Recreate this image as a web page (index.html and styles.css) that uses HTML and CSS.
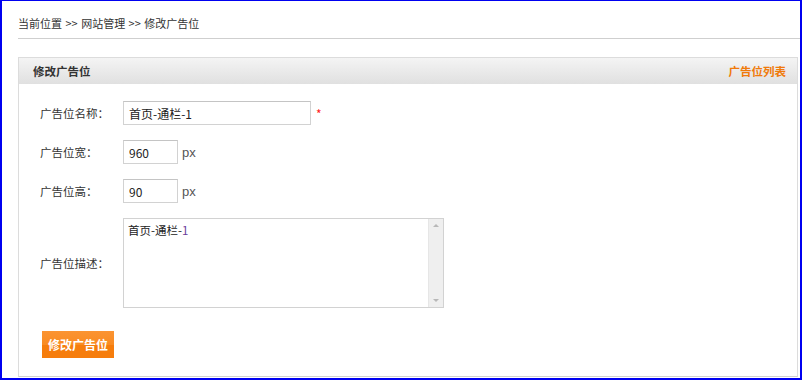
FILE: index.html
```html
<!DOCTYPE html>
<html lang="zh-CN">
<head>
<meta charset="utf-8">
<title>修改广告位</title>
<link rel="stylesheet" href="styles.css">
</head>
<body>
<div class="frame">
  <div class="crumb">当前位置 &gt;&gt; 网站管理 &gt;&gt; 修改广告位</div>
  <div class="panel">
    <div class="panel-head">
      <span class="panel-title">修改广告位</span>
      <a class="panel-link" href="#">广告位列表</a>
    </div>
    <form class="panel-body">
      <div class="row">
        <label class="label">广告位名称：</label>
        <input class="input input-wide" type="text" value="首页-通栏-1">
        <span class="req">*</span>
      </div>
      <div class="row">
        <label class="label">广告位宽：</label>
        <input class="input input-small" type="text" value="960">
        <span class="unit">px</span>
      </div>
      <div class="row">
        <label class="label">广告位高：</label>
        <input class="input input-small" type="text" value="90">
        <span class="unit">px</span>
      </div>
      <div class="row">
        <label class="label">广告位描述：</label>
        <div class="textarea">
          <div class="ta-text">首页-通栏-<span class="num">1</span></div>
          <div class="ta-scroll">
            <span class="arrow up"></span>
            <span class="arrow down"></span>
          </div>
        </div>
      </div>
      <div class="actions">
        <button class="btn" type="button">修改广告位</button>
      </div>
    </form>
  </div>
</div>
</body>
</html>
```
FILE: styles.css
```css
* { box-sizing: border-box; }
html, body { margin: 0; padding: 0; }
body {
  font-family: "Noto Sans CJK SC", "Liberation Sans", sans-serif;
  font-size: 12px;
  color: #333;
  background: #fff;
}
.frame {
  width: 802px;
  height: 380px;
  border-style: solid;
  border-color: #0000f0;
  border-width: 1px 2px 2px 2px;
  overflow: hidden;
}
.crumb {
  margin-left: 16px;
  padding: 14px 0 7px 0;
  line-height: 16px;
  height: 38px;
  border-bottom: 1px solid #cfcfcf;
  color: #333;
  font-size: 11px;
  word-spacing: 1px;
}
.panel {
  margin: 18px 2px 0 16px;
  border: 1px solid #dcdcdc;
  border-bottom-color: #d0d0d0;
}
.panel-head {
  height: 26px;
  display: flex;
  align-items: center;
  justify-content: space-between;
  padding: 0 11px 0 14px;
  background: linear-gradient(#f4f4f4, #e0e0e0);
}
.panel-title {
  font-weight: bold;
  color: #333;
  font-size: 11.5px;
}
.panel-link {
  font-weight: bold;
  color: #f07a0a;
  text-decoration: none;
  font-size: 11.5px;
}
.panel-body {
  margin: 0;
  padding: 17px 0 18px 21px;
}
.row {
  display: flex;
  align-items: center;
  margin-bottom: 15px;
}
.label {
  width: 83px;
  flex: none;
  color: #333;
  font-size: 11.5px;
}
.input {
  height: 24px;
  border: 1px solid #d2d2d2;
  border-top-color: #c4c4c4;
  padding: 0 5px;
  font-family: "Noto Sans CJK SC", "Liberation Sans", sans-serif;
  font-size: 12px;
  color: #222;
  outline: none;
}
.input-wide { width: 188px; }
.input-small { width: 55px; }
.req {
  color: #ff2020;
  margin-left: 5px;
  font-size: 12px;
}
.unit {
  margin-left: 4px;
  color: #555;
  font-size: 13px;
  font-family: "Liberation Sans", sans-serif;
}
.textarea {
  width: 321px;
  height: 90px;
  border: 1px solid #d2d2d2;
  display: flex;
}
.ta-text {
  flex: 1;
  padding: 3px 4px;
  font-size: 11.5px;
  line-height: 16px;
  color: #222;
}
.num { color: #6a3d9a; }
.ta-scroll {
  width: 15px;
  flex: none;
  background: #efefef;
  border-left: 1px solid #e6e6e6;
  display: flex;
  flex-direction: column;
  justify-content: space-between;
  align-items: center;
  padding: 5px 0;
}
.arrow {
  width: 0;
  height: 0;
  border-left: 3px solid transparent;
  border-right: 3px solid transparent;
}
.arrow.up { border-bottom: 3px solid #b8b8b8; }
.arrow.down { border-top: 3px solid #b8b8b8; }
.actions {
  padding-top: 8px;
  padding-left: 2px;
}
.btn {
  width: 72px;
  height: 27px;
  border: none;
  padding: 0;
  background: linear-gradient(#fb9432 0%, #f98b22 50%, #f67d0c 51%, #f67d0c 100%);
  color: #fff;
  font-weight: bold;
  font-size: 12px;
  font-family: "Noto Sans CJK SC", "Liberation Sans", sans-serif;
  cursor: pointer;
}
```
